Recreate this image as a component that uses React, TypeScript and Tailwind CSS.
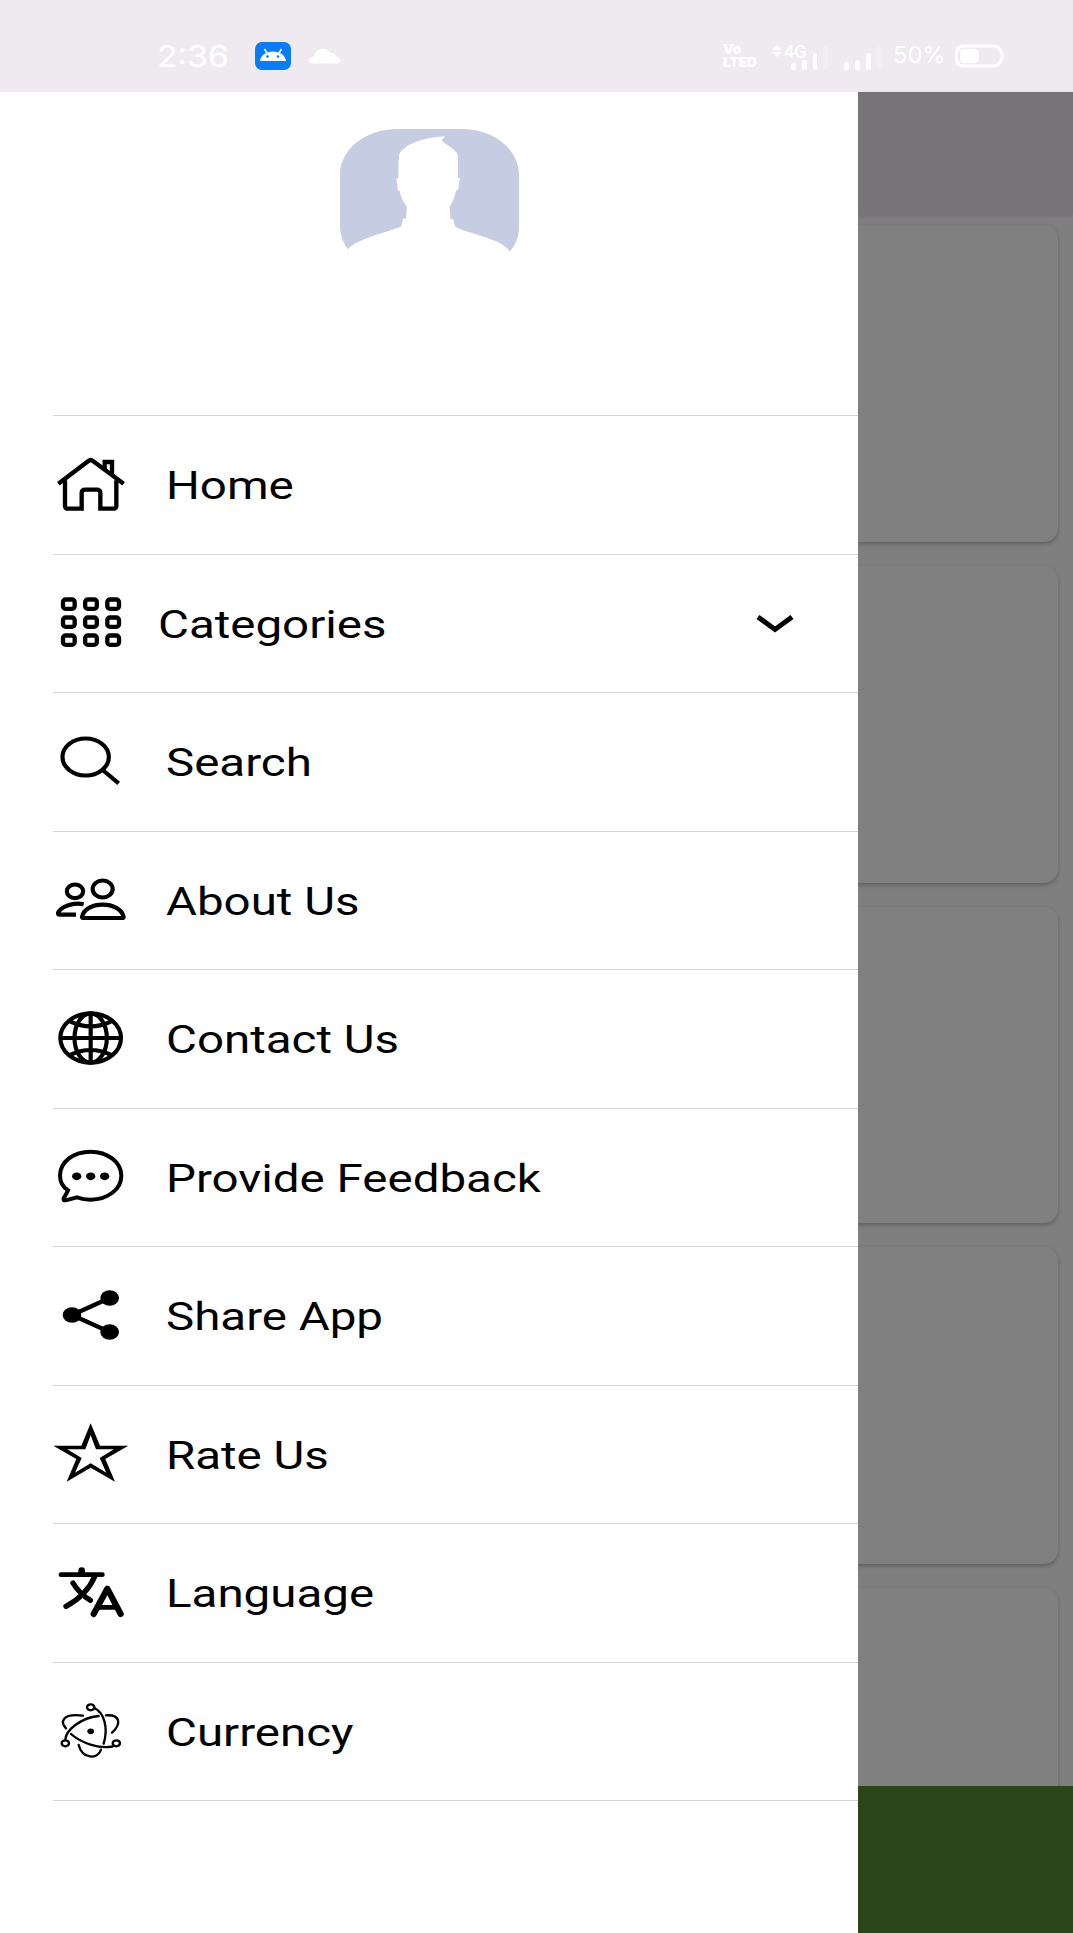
import React from 'react';

interface MenuItem {
  label: string;
  icon: React.ReactNode;
  expandable?: boolean;
}

const HomeIcon = () => (
  <g strokeWidth="13">
    <path d="M16 113L106 45Q113 39 120 45L212 113" />
    <path d="M36 103V180Q36 188 45 188H86V141Q86 131 97 131H131Q142 131 142 141V188H181Q190 188 190 180V103" />
    <path d="M155 70V48H177V88" />
  </g>
);

const GridIcon = () => (
  <g strokeWidth="13">
    {[46.5, 100.5, 154.5].map((y) =>
      [30, 96.5, 163].map((x) => <rect key={`${x}-${y}`} x={x} y={y} width="35" height="28" rx="8" />)
    )}
  </g>
);

const SearchIcon = () => (
  <g strokeWidth="12.5">
    <ellipse cx="98" cy="102" rx="69.5" ry="55.5" />
    <path d="M149 141L197 181" />
  </g>
);

const PeopleIcon = () => (
  <g strokeWidth="12.5">
    <ellipse cx="66" cy="91" rx="24.5" ry="20.5" />
    <ellipse cx="149" cy="84" rx="30" ry="25.5" />
    <path d="M87 168C91 144 119 131 149 131C179 131 207 144 212 168Q212 171 207 171H92Q87 171 87 168Z" />
    <path d="M92 130C60 123 22 137 15 156Q14 161 20 161H69" />
  </g>
);

const GlobeIcon = () => (
  <g strokeWidth="12.5">
    <ellipse cx="113" cy="114" rx="91" ry="74" />
    <ellipse cx="113" cy="114" rx="48.5" ry="74" />
    <path d="M113 40V188M22 114H204M51 64Q113 94 175 64M51 165Q113 135 175 165" />
  </g>
);

const FeedbackIcon = () => (
  <g strokeWidth="12">
    <path d="M45 157C26 144 21 128 21 113C21 71 62 41 113 41C164 41 205 73 205 113C205 154 164 185 113 185C97 185 85 183 72 178L38 187Q30 188 32 181Q40 169 45 157Z" />
    <g fill="black" stroke="none">
      <ellipse cx="71" cy="115" rx="14" ry="11.5" />
      <ellipse cx="113" cy="115" rx="14" ry="11.5" />
      <ellipse cx="155" cy="115" rx="14" ry="11.5" />
    </g>
  </g>
);

const ShareIcon = () => (
  <g strokeWidth="13">
    <path d="M170 63L57 114L170 165" />
    <g fill="black" stroke="none">
      <ellipse cx="57" cy="114" rx="28" ry="23" />
      <ellipse cx="170" cy="63" rx="28" ry="23" />
      <ellipse cx="170" cy="165" rx="28" ry="23" />
    </g>
  </g>
);

const StarIcon = () => (
  <path
    fill="black"
    stroke="none"
    fillRule="evenodd"
    d="M113 25L141 92H226L157 132L186 200L113 158L41 200L70 132L1 92H85ZM113 61L97 103H43L86 129L66 173L113 145L160 173L140 129L183 103H129Z"
  />
);

const LanguageIcon = () => (
  <g strokeWidth="16" strokeLinecap="round" strokeLinejoin="round">
    <path d="M24 62H148" strokeWidth="14.5" />
    <path d="M86 50V55" strokeWidth="20" />
    <path d="M126 66Q100 125 39 157M60 87Q78 118 112 139" />
    <path d="M122 180L163 104L203 180" strokeWidth="18.5" />
    <path d="M136 160H190" strokeWidth="14" />
  </g>
);

const CurrencyIcon = () => (
  <g strokeWidth="7" strokeLinecap="round">
    <ellipse cx="113" cy="46" rx="11" ry="9" />
    <ellipse cx="37" cy="154" rx="11" ry="9" />
    <ellipse cx="190" cy="154" rx="11" ry="9" />
    <ellipse cx="113" cy="118" rx="10" ry="8.5" fill="black" stroke="none" />
    <path d="M124 48C152 61 167 104 152 155" />
    <path d="M37 144C38 113 85 77 137 72" />
    <path d="M54 126C85 154 143 172 180 163" />
    <path d="M90 71C25 63 22 91 39 109" />
    <path d="M159 70C202 67 206 96 177 122" />
    <path d="M77 159C88 202 134 203 144 173" />
  </g>
);

const menuItems: MenuItem[] = [
  { label: 'Home', icon: <HomeIcon /> },
  { label: 'Categories', icon: <GridIcon />, expandable: true },
  { label: 'Search', icon: <SearchIcon /> },
  { label: 'About Us', icon: <PeopleIcon /> },
  { label: 'Contact Us', icon: <GlobeIcon /> },
  { label: 'Provide Feedback', icon: <FeedbackIcon /> },
  { label: 'Share App', icon: <ShareIcon /> },
  { label: 'Rate Us', icon: <StarIcon /> },
  { label: 'Language', icon: <LanguageIcon /> },
  { label: 'Currency', icon: <CurrencyIcon /> },
];

const StatusBar = () => (
  <header className="flex h-[92px] shrink-0 items-center bg-[#eeeaf0] pt-[19px] pr-[68px] pl-[157px] text-white">
    <span className="w-[98px] shrink-0 origin-left scale-x-[1.12] font-['Inter'] text-[30px] leading-none">2:36</span>
    <svg className="h-7 w-9 shrink-0" viewBox="0 0 36 28">
      <rect width="36" height="28" rx="7" fill="#0a7cf5" />
      <path d="M5 19C6 13 11 9.5 18 9.5S30 13 31 19Z" fill="white" />
      <path d="M12 11L9.5 7M24 11L26.5 7" stroke="white" strokeWidth="1.6" />
      <circle cx="12.5" cy="14.5" r="1.3" fill="#0a7cf5" />
      <circle cx="23" cy="14.5" r="1.3" fill="#0a7cf5" />
    </svg>
    <svg className="ml-[17px] h-4 w-[34px] shrink-0" viewBox="0 0 34 16" fill="white">
      <path d="M5 15.5C-1 15.5 0 9 6 8.5C7 0 19 -2 22 5C26 4 28 7 28 9C33 9 34 15.5 29 15.5Z" />
    </svg>

    <div className="ml-auto flex items-center">
      <div className="flex w-[46px] flex-col font-['Inter'] text-[13.5px] leading-[13px] font-black">
        <span>Vo</span>
        <span className="whitespace-nowrap">LTED</span>
      </div>
      {/* First SIM, with the network type over the short bars */}
      <div className="relative mt-1 ml-[3px] flex h-6 w-[56px] items-end gap-[6px] pl-[19px]">
        <svg className="absolute top-[-1px] left-0 h-3 w-[10px]" viewBox="0 0 10 12" fill="white">
          <path d="M5 0L10 5H0ZM5 12L10 7H0Z" />
        </svg>
        <span className="absolute top-[-3px] left-[12px] text-[18px] leading-none font-medium">4G</span>
        <i className="h-[7px] w-[5px] rounded-sm bg-white" />
        <i className="h-[10px] w-[5px] rounded-sm bg-white" />
        <i className="h-[17px] w-[5px] rounded-sm bg-white" />
        <i className="h-6 w-[5px] rounded-sm bg-white/25" />
      </div>
      <div className="mt-1 ml-4 flex h-6 items-end gap-[6px]">
        <i className="h-[8px] w-[5px] rounded-sm bg-white" />
        <i className="h-[10px] w-[5px] rounded-sm bg-white" />
        <i className="h-[17px] w-[5px] rounded-sm bg-white" />
        <i className="h-6 w-[5px] rounded-sm bg-white/25" />
      </div>
      <span className="ml-[11px] w-[62px] origin-left scale-x-[1.03] font-['Inter'] text-[23px] leading-none">50%</span>
      <svg className="h-6 w-[50px]" viewBox="0 0 50 24" fill="none">
        <path d="M9 2H38C44 2 45 5 46 8Q49 12 46 16C45 19 44 22 38 22H9Q1.500 22 1.500 14V10Q1.500 2 9 2Z" stroke="white" strokeWidth="3" />
        <rect x="5" y="5" width="19" height="14" rx="4" fill="white" />
      </svg>
    </div>
  </header>
);

const Avatar = () => (
  <svg className="h-[122.5px] w-[179px]" viewBox="60 57 536 368" preserveAspectRatio="none">
    <path
      fill="#c6cce1"
      d="M84 419C68 399 60 372 60 345V195C60 118 135 57 235 57H425C520 57 596 118 596 195V350C596 380 587 405 568 425C552 398 500 384 460 371C435 364 415 357 404 350L399 327H391L388 290C397 276 404 260 407 243L414 239L419 205H413V135C405 117 383 108 366 94C364 88 370 87 374 79C325 82 264 95 238 130L235 160V205H229L233 241L239 243C242 263 250 276 260 290L258 326H249L243 351C200 367 103 390 84 419Z"
    />
  </svg>
);

const App: React.FC = () => {
  return (
    <div className="flex h-[1933px] w-[1073px] flex-col overflow-hidden bg-white font-['Roboto',sans-serif] text-black">
      <StatusBar />

      <div className="flex min-h-0 flex-1">
        {/* Drawer */}
        <aside className="z-10 w-[858px] shrink-0 bg-white">
          <div className="flex h-[323px] justify-center pt-[37px]">
            <Avatar />
          </div>
          <nav className="ml-[53px] border-b border-[#d6d6d6]">
            {menuItems.map((item) => (
              <div key={item.label} className="flex h-[138.5px] items-center border-t border-[#d6d6d6]">
                <svg className="size-[78px] shrink-0" viewBox="0 0 234 234" fill="none" stroke="black">
                  {item.icon}
                </svg>
                <span
                  className={`mt-[3px] origin-left scale-x-[1.233] text-[38.5px] leading-none whitespace-nowrap ${
                    item.expandable ? 'ml-[27px]' : 'ml-[35px]'
                  }`}
                >
                  {item.label}
                </span>
                {item.expandable && (
                  <svg className="mt-[2px] mr-[64px] ml-auto h-5 w-[38px]" viewBox="0 0 38 20" fill="none" stroke="black" strokeWidth="5">
                    <path d="M2 3L19 15.500L36 3" />
                  </svg>
                )}
              </div>
            ))}
          </nav>
        </aside>

        {/* Dimmed page behind the drawer */}
        <main className="flex flex-1 flex-col bg-[#7f7f7f]">
          <div className="h-[123px] shrink-0 bg-[#777477] shadow-[0_1px_3px_rgba(0,0,0,0.12)]" />
          <div className="flex min-h-0 flex-1 flex-col gap-6 overflow-hidden pt-[10px] pr-[15px]">
            {[0, 1, 2, 3, 4].map((card) => (
              <div
                key={card}
                className="-ml-5 h-[316.8px] shrink-0 rounded-[14px] bg-[#808080] shadow-[0_2px_4px_rgba(0,0,0,0.25)]"
              />
            ))}
          </div>
          <div className="h-[147px] shrink-0 bg-[#2a4518]" />
        </main>
      </div>
    </div>
  );
};

export default App;
